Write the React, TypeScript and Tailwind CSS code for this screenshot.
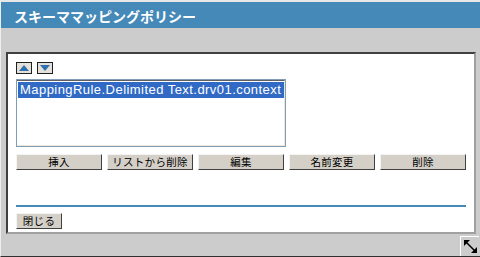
const jp = { fontFamily: '"Noto Sans CJK JP", "Liberation Sans", sans-serif' };

const buttons = ["挿入", "リストから削除", "編集", "名前変更", "削除"];

const ArrowButton = ({ up }: { up: boolean }) => (
  <button className="w-[16px] h-[12px] bg-[#e4e1da] border border-[#202020] flex items-center justify-center p-0">
    <svg width="12" height="8" viewBox="0 0 12 8">
      {up ? (
        <polygon points="6,1 11,7 1,7" fill="#2f6fb0" />
      ) : (
        <polygon points="1,1 11,1 6,7" fill="#2f6fb0" />
      )}
    </svg>
  </button>
);

const GrayButton = ({ label, width }: { label: string; width: string }) => (
  <button
    style={jp}
    className={`${width} h-[16px] bg-[#d4d0c8] border-t border-l border-t-[#f4f4f4] border-l-[#f4f4f4] border-r border-b border-r-[#404040] border-b-[#404040] text-[10.5px] leading-[14px] tracking-[0.3px] text-black flex items-center justify-center p-0`}
  >
    {label}
  </button>
);

export default function App() {
  return (
    <div className="w-[480px] h-[257px] bg-[#cccccc] flex flex-col border-t-2 border-t-[#e8e8e8] border-l border-l-[#eeeeee] border-b border-b-[#303030] overflow-hidden">
      <div
        style={jp}
        className="h-[26px] bg-[#4589b9] text-white font-bold text-[14px] leading-[26px] pl-[13px] pt-[1px]"
      >
        スキーママッピングポリシー
      </div>

      <div className="pt-[24px] pl-[5px]">
        <div className="w-[470px] h-[182px] bg-white border-t-2 border-l-2 border-t-[#404040] border-l-[#404040] border-r-2 border-b-2 border-r-[#a0a0a0] border-b-[#a0a0a0] pl-[8px] pt-[8px] flex flex-col">
          <div className="flex gap-[5px]">
            <ArrowButton up />
            <ArrowButton up={false} />
          </div>

          <div className="mt-[5px] w-[270px] h-[68px] border border-[#7f9db9] bg-white">
            <div className="h-full border-t border-t-[#606060] border-r border-b border-r-[#ece9d8] border-b-[#ece9d8] pt-[1px] pl-[1px]">
              <div
                className="h-[16px] bg-[#316ac5] text-white text-[13px] leading-[16px] tracking-[0.45px] pl-[2px] whitespace-nowrap overflow-hidden"
                style={{ fontFamily: '"Liberation Sans", Arial, sans-serif' }}
              >
                MappingRule.Delimited Text.drv01.context
              </div>
            </div>
          </div>

          <div className="mt-[7px] flex gap-[5px]">
            {buttons.map((b) => (
              <GrayButton key={b} label={b} width="w-[86px]" />
            ))}
          </div>

          <div className="mt-[35px] w-[450px] h-[2px] bg-[#4589b9]" />

          <div className="mt-[6px]">
            <GrayButton label="閉じる" width="w-[46px]" />
          </div>
        </div>
      </div>

      <div className="flex-1 flex justify-end items-end pr-[1px]">
        <div className="w-[19px] h-[20px] border-t border-l border-white bg-[#cccccc] flex items-center justify-center">
          <svg width="15" height="15" viewBox="0 0 15 15">
            <line x1="3" y1="3" x2="12" y2="12" stroke="#000" strokeWidth="1.5" />
            <polygon points="1,1 7,1 1,7" fill="#000" />
            <polygon points="14,14 8,14 14,8" fill="#000" />
          </svg>
        </div>
      </div>
    </div>
  );
}
